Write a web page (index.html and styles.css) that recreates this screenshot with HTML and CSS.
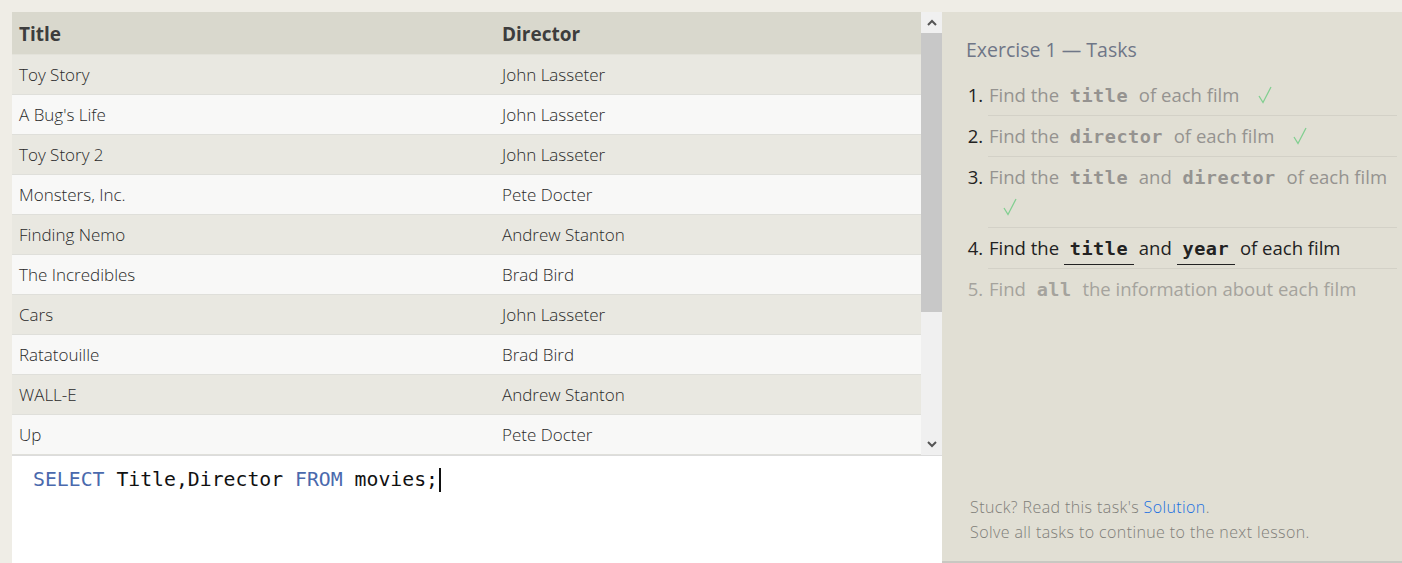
FILE: index.html
```html
<!DOCTYPE html>
<html>
<head>
<meta charset="utf-8">
<link rel="stylesheet" href="styles.css">
</head>
<body>
<div class="page">
  <div class="left">
    <div class="results">
      <div class="table-wrap">
        <table class="grid">
          <thead><tr><th class="c1">Title</th><th>Director</th></tr></thead>
          <tbody>
            <tr><td>Toy Story</td><td>John Lasseter</td></tr>
            <tr><td>A Bug's Life</td><td>John Lasseter</td></tr>
            <tr><td>Toy Story 2</td><td>John Lasseter</td></tr>
            <tr><td>Monsters, Inc.</td><td>Pete Docter</td></tr>
            <tr><td>Finding Nemo</td><td>Andrew Stanton</td></tr>
            <tr><td>The Incredibles</td><td>Brad Bird</td></tr>
            <tr><td>Cars</td><td>John Lasseter</td></tr>
            <tr><td>Ratatouille</td><td>Brad Bird</td></tr>
            <tr><td>WALL-E</td><td>Andrew Stanton</td></tr>
            <tr><td>Up</td><td>Pete Docter</td></tr>
          </tbody>
        </table>
      </div>
      <div class="scrollbar">
        <div class="arrow">
          <svg width="10" height="7" viewBox="0 0 10 7"><path d="M1 6 L5 2 L9 6" fill="none" stroke="#555" stroke-width="2"/></svg>
        </div>
        <div class="thumb"></div>
        <div class="track"></div>
        <div class="arrow">
          <svg width="10" height="7" viewBox="0 0 10 7"><path d="M1 1 L5 5 L9 1" fill="none" stroke="#555" stroke-width="2"/></svg>
        </div>
      </div>
    </div>
    <div class="editor"><span class="kw">SELECT</span> Title,Director <span class="kw">FROM</span> movies;<span class="cursor"></span></div>
  </div>
  <div class="right">
    <h2 class="heading">Exercise 1 — Tasks</h2>
    <ol class="tasks">
      <li class="done">Find the <code>title</code> of each film <span class="check"><svg width="14" height="18" viewBox="0 0 14 18"><path d="M1 10 L5 16.5 L13 1" fill="none" stroke="#82cf91" stroke-width="1.3"/></svg></span></li>
      <li class="done">Find the <code>director</code> of each film <span class="check"><svg width="14" height="18" viewBox="0 0 14 18"><path d="M1 10 L5 16.5 L13 1" fill="none" stroke="#82cf91" stroke-width="1.3"/></svg></span></li>
      <li class="done">Find the <code>title</code> and <code>director</code> of each film <span class="check"><svg width="14" height="18" viewBox="0 0 14 18"><path d="M1 10 L5 16.5 L13 1" fill="none" stroke="#82cf91" stroke-width="1.3"/></svg></span></li>
      <li class="current">Find the <code class="ul">title</code> and <code class="ul">year</code> of each film</li>
      <li class="todo">Find <code>all</code> the information about each film</li>
    </ol>
    <div class="footer">
      <p>Stuck? Read this task's <a class="link">Solution</a>.</p>
      <p>Solve all tasks to continue to the next lesson.</p>
    </div>
  </div>
</div>
</body>
</html>
```

FILE: styles.css
```css
html, body {
  margin: 0;
  padding: 0;
  background: #efede6;
  height: 563px;
  overflow: hidden;
}
.page {
  display: flex;
  padding: 12px 0 0 12px;
  height: 551px;
  font-family: "Open Sans", "Noto Sans", sans-serif;
}
.left {
  width: 930px;
  display: flex;
  flex-direction: column;
}
.results {
  display: flex;
  height: 443px;
  border-bottom: 1px solid #dcdcdc;
}
.table-wrap {
  width: 909px;
  overflow: hidden;
}
.grid {
  width: 100%;
  table-layout: fixed;
  border-collapse: collapse;
  font-size: 17px;
  color: #333;
}
.grid th {
  background: #d9d8cd;
  height: 42px;
  box-sizing: border-box;
  text-align: left;
  font-weight: 700;
  font-size: 19px;
  color: #3d3d3d;
  padding: 3px 7px 0 7px;
  border-bottom: 1px solid #e3e2da;
}
.grid th.c1 {
  width: 483px;
}
.grid td {
  height: 40px;
  box-sizing: border-box;
  padding: 0 7px;
  font-weight: 300;
  color: #2a2a2a;
  border-bottom: 1px solid #dfdfda;
}
.grid tbody tr:nth-child(odd) td {
  background: #e9e8e1;
}
.grid tbody tr:nth-child(even) td {
  background: #f8f8f7;
}
.scrollbar {
  width: 21px;
  display: flex;
  flex-direction: column;
  background: #f0f0f0;
}
.arrow {
  height: 21px;
  display: flex;
  align-items: center;
  justify-content: center;
  background: #f0f0f0;
}
.thumb {
  height: 279px;
  background: #c8c8c8;
}
.track {
  flex: 1;
}
.editor {
  flex: 1;
  background: #ffffff;
  padding: 12px 21px;
  font-family: "DejaVu Sans Mono", monospace;
  font-size: 19.8px;
  line-height: 24px;
  color: #111;
  white-space: pre;
}
.kw {
  color: #4a69ad;
}
.cursor {
  display: inline-block;
  width: 0;
  height: 24px;
  border-left: 2px solid #111;
  vertical-align: top;
  margin-left: 1px;
}
.right {
  width: 460px;
  background: #e1dfd4;
  display: flex;
  flex-direction: column;
  border-bottom: 2px solid #c9c8c2;
  box-sizing: border-box;
  padding: 0 5px 0 24px;
}
.heading {
  margin: 25px 0 12px 0;
  font-size: 19.5px;
  font-weight: 400;
  color: #6f7687;
  line-height: 26px;
}
.tasks {
  margin: 0;
  padding-left: 22px;
  font-size: 18.5px;
  line-height: 30px;
}
.tasks li {
  padding: 5px 0 5px 1px;
  border-bottom: 1px solid #d3d1c7;
}
.tasks li:last-child {
  border-bottom: none;
}
.tasks li::marker {
  color: #222;
}
.tasks li.done {
  color: #959390;
}
.tasks li.current {
  color: #222;
}
.tasks li.todo {
  color: #a5a39d;
}
.tasks li.todo::marker {
  color: #a5a39d;
}
.tasks code {
  font-family: "DejaVu Sans Mono", monospace;
  font-weight: 700;
  font-size: 18.5px;
  line-height: 1;
  padding: 0 6px;
  letter-spacing: 0.5px;
}
.tasks code.ul {
  border-bottom: 1px solid #222;
  padding-bottom: 5px;
}
.check {
  display: inline-block;
  margin-left: 14px;
  line-height: 1;
  vertical-align: -2px;
}
.footer {
  margin-top: auto;
  margin-bottom: 16px;
  font-size: 16px;
  font-weight: 300;
  letter-spacing: 0.4px;
  color: #7f7e79;
  padding-left: 4px;
}
.footer p {
  margin: 0;
  line-height: 25px;
}
.link {
  color: #1a6fe0;
}
```
